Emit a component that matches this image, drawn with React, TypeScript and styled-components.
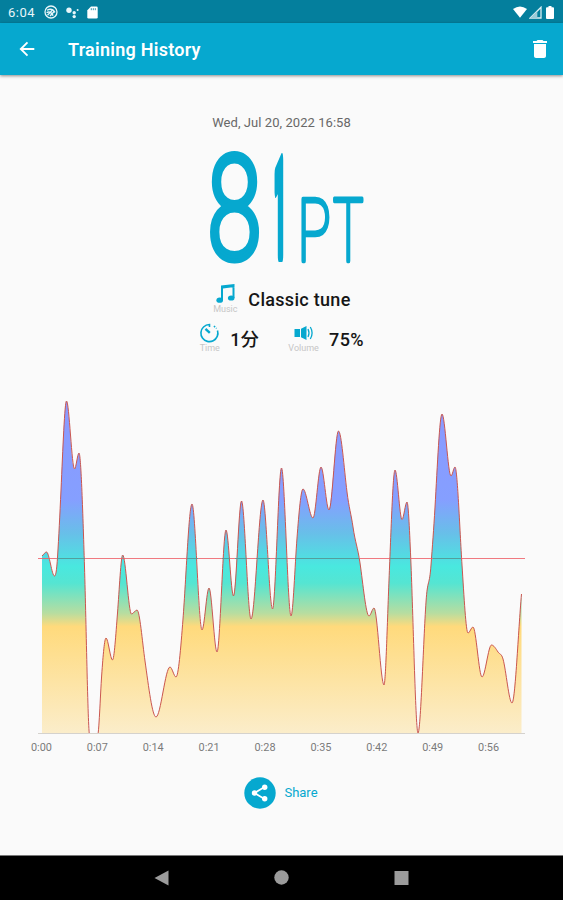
import React from "react";
import styled, { createGlobalStyle } from "styled-components";

const accent = "#06a8cf";

const GlobalStyle = createGlobalStyle`
  *, *::before, *::after { box-sizing: border-box; }
  body { margin: 0; background: #fafafa; font-family: Roboto, "Noto Sans CJK JP", sans-serif; }
`;

const Screen = styled.div`
  display: flex;
  flex-direction: column;
  width: 563px;
  height: 900px;
  background: #fafafa;
  overflow: hidden;
`;

const StatusBar = styled.header`
  display: flex;
  align-items: center;
  justify-content: space-between;
  height: 23px;
  padding: 1px 7px 0 8px;
  background: #047f9d;
  color: #e8f6fa;
  font-size: 13px;
  svg { display: block; }
`;

const StatusGroup = styled.div<{ $gap: number }>`
  display: flex;
  align-items: center;
  gap: ${(p) => p.$gap}px;
`;

const Clock = styled.span`
  width: 27px;
  margin-right: 1px;
  letter-spacing: 0.5px;
`;

const AppBar = styled.div`
  display: flex;
  align-items: center;
  height: 52px;
  padding: 0 11px 0 15px;
  background: ${accent};
  box-shadow: 0 1px 3px rgba(0, 0, 0, 0.45);
  color: #fff;
  svg { display: block; }
`;

const Title = styled.h1`
  flex: 1;
  margin: 1px 0 0 29px;
  font-size: 18px;
  font-weight: 600;
  line-height: 24px;
  letter-spacing: 0.25px;
`;

const IconButton = styled.button`
  display: flex;
  padding: 0;
  border: 0;
  background: none;
  color: inherit;
`;

const Summary = styled.section`
  display: flex;
  flex-direction: column;
  align-items: center;
  height: 315px;
  padding-top: 38px;
`;

const DateText = styled.time`
  height: 20px;
  color: #686868;
  font-size: 13px;
  line-height: 20px;
  letter-spacing: 0.06px;
  white-space: nowrap;
`;

const Score = styled.svg`
  display: block;
  width: 160px;
  height: 130px;
  margin: 8px 0 0 11px;
  overflow: visible;
  font-family: Roboto, sans-serif;
  font-weight: 100;
  fill: ${accent};
  stroke: ${accent};
  stroke-linejoin: round;
`;

const Facts = styled.div<{ $top: number }>`
  display: flex;
  align-items: flex-start;
  gap: 29px;
  height: 36px;
  margin-top: ${(p) => p.$top}px;
`;

const Fact = styled.div`
  display: flex;
  align-items: flex-start;
  gap: 10px;
`;

const FactIcon = styled.div<{ $width: number }>`
  display: flex;
  flex-direction: column;
  align-items: center;
  width: ${(p) => p.$width}px;
  color: #c6c6c6;
  font-size: 9px;
  line-height: 10px;
  white-space: nowrap;
  svg { display: block; }
`;

const FactValue = styled.span`
  margin-top: 5px;
  color: #161616;
  font-size: 18px;
  font-weight: 500;
  line-height: 24px;
  letter-spacing: 0.3px;
  white-space: nowrap;
`;

const Chart = styled.figure`
  height: 365px;
  margin: 0;
`;

const Plot = styled.svg`
  display: block;
`;

const Axis = styled.div`
  display: grid;
  grid-template-columns: repeat(9, 55.9px);
  margin: -1px 0 0 13.5px;
  color: #7b7b7b;
  font-size: 10.9px;
  line-height: 16px;
  text-align: center;
`;

const ShareArea = styled.div`
  display: flex;
  flex: 1;
  justify-content: center;
  align-items: flex-start;
  padding: 22px 1px 0 0;
`;

const ShareButton = styled.button`
  display: flex;
  align-items: center;
  gap: 8px;
  padding: 0;
  border: 0;
  background: none;
  color: ${accent};
  font: 400 13px/32px Roboto, sans-serif;
  svg { display: block; }
`;

const NavBar = styled.nav`
  display: flex;
  align-items: center;
  justify-content: center;
  gap: 104px;
  height: 45px;
  border-top: 1px solid #777;
  background: #000;
`;

const samples: [number, number][] = [
  [42, 556], [46.5, 552], [54.5, 576], [57.6, 556], [61, 490], [66.5, 401],
  [74.5, 469], [79, 453], [84.5, 567], [89.7, 736], [97.5, 736],
  [101.7, 675], [106, 638], [112.5, 660], [117.5, 613], [122.7, 555], [131.5, 614], [137, 610],
  [145, 661], [156, 717], [170, 667], [176, 677], [183, 619],
  [192, 504], [202, 630], [209, 588], [217, 652], [226, 530], [233.5, 596],
  [241.5, 501], [251, 619], [263, 500], [272.5, 609], [281.5, 468], [291, 616],
  [297, 538], [303, 489], [313, 518], [321, 467], [329, 510], [338.5, 431], [347, 492], [353, 527],
  [360, 563], [369, 616], [374, 608], [384, 685],
  [389, 580], [395, 470], [402, 519.5], [407, 502], [411, 565],
  [418, 733], [426, 602], [431, 565], [435, 507], [442, 414], [451, 476], [455, 467],
  [462, 565], [468, 633], [473, 627], [482, 677], [491.5, 645],
  [498, 652], [503, 659], [512, 703], [521.5, 594],
];

/* Monotone cubic interpolation keeps every peak and valley on its sample. */
function smooth(points: [number, number][]): string {
  const slope = points.slice(1).map((p, i) => (p[1] - points[i][1]) / (p[0] - points[i][0]));
  const tangent = points.map((_, i) => {
    if (i === 0) return slope[0];
    if (i === points.length - 1) return slope[i - 1];
    const a = slope[i - 1];
    const b = slope[i];
    if (a * b <= 0) return 0;
    return Math.sign(a) * Math.min(Math.abs(a + b) * 0.62, 2.5 * Math.abs(a), 2.5 * Math.abs(b));
  });
  return points.slice(1).reduce((path, [x, y], i) => {
    const [px, py] = points[i];
    const d = (x - px) / 3;
    return `${path} C${px + d},${(py + tangent[i] * d).toFixed(2)} ${x - d},${(y - tangent[i + 1] * d).toFixed(2)} ${x},${y}`;
  }, `M${points[0][0]},${points[0][1]}`);
}

const curve = smooth(samples);
const ticks = ["0:00", "0:07", "0:14", "0:21", "0:28", "0:35", "0:42", "0:49", "0:56"];

export default function App() {
  return (
    <>
      <GlobalStyle />
      <Screen>
        <StatusBar>
          <StatusGroup $gap={8}>
            <Clock>6:04</Clock>
            <svg width="14" height="14" viewBox="0 0 14 14" fill="none" stroke="#e8f6fa" strokeWidth="1.3">
              <circle cx="7" cy="7" r="6" />
              <path d="M3 5.2q5-2.7 8 2.2M2.6 7.6q4-2 6.5 3M3.5 10.3 8 5.5M6 11l4.6-5" />
            </svg>
            <svg width="13" height="13" viewBox="0 0 13 13" fill="#e8f6fa">
              <circle cx="3" cy="4.3" r="2.7" /><circle cx="8.2" cy="6.7" r="1.7" />
              <circle cx="11.6" cy="4" r="1" /><circle cx="8.2" cy="10.6" r="1.7" />
            </svg>
            <svg width="11" height="13" viewBox="0 0 11 13">
              <path d="M4 0.5h5.4q1.3 0 1.3 1.3v9.4q0 1.3-1.3 1.3H1.6Q.3 12.5 .3 11.2V4.2Z" fill="#fff" />
              <path d="M4.3 2.2v2M6.3 2.2v2M8.3 2.2v2" stroke="#047f9d" strokeWidth=".8" />
            </svg>
          </StatusGroup>
          <StatusGroup $gap={2}>
            <svg width="14" height="12" viewBox="0 0 14 12"><path d="M0 3Q7-2.2 14 3L7 11.7Z" fill="#fff" /></svg>
            <svg width="13" height="13" viewBox="0 0 13 13">
              <path d="M1.2 12 12 1.2V12Z" fill="none" stroke="#d9eef3" strokeWidth="1.3" />
              <path d="M1 12.3 8.3 5v7.3Z" fill="#9bcbd8" />
            </svg>
            <svg width="12" height="13" viewBox="0 0 12 13"><path d="M4.5 0h3v1.3H9q1 0 1 1V12q0 1-1 1H3q-1 0-1-1V2.3q0-1 1-1h1.5Z" fill="#fff" /></svg>
          </StatusGroup>
        </StatusBar>
        <AppBar>
          <IconButton aria-label="Back">
            <svg width="24" height="24" viewBox="0 0 24 24" fill="none" stroke="#fff" strokeWidth="1.9">
              <path d="M19.3 12H5.8M12.5 5.3 5.8 12l6.7 6.7" />
            </svg>
          </IconButton>
          <Title>Training History</Title>
          <IconButton aria-label="Delete">
            <svg width="24" height="24" viewBox="0 0 24 24" fill="#fff">
              <path d="M6 19c0 1.1.9 2 2 2h8c1.1 0 2-.9 2-2V7H6v12zM19 4h-3.5l-1-1h-5l-1 1H5v2h14V4z" />
            </svg>
          </IconButton>
        </AppBar>

        <Summary>
          <DateText>Wed, Jul 20, 2022 16:58</DateText>
          <Score viewBox="207 141 160 130" aria-label="81PT">
            <text fontSize="146" strokeWidth="5" fontWeight="300" transform="translate(206.5 260) scale(.69 1)" style={undefined}>8</text>
            <text fontSize="133" fontWeight="900" strokeWidth="14" transform="translate(274 255) scale(.15 1)">1</text>
            <g fontSize="88" strokeWidth="4.6">
              <text transform="translate(297.5 260.5) scale(.63 1)">P</text>
              <text transform="translate(333 260.5) scale(.58 1)">T</text>
            </g>
          </Score>
          <Facts $top={12}>
            <Fact>
              <FactIcon $width={26}>
                <svg width="22" height="21" viewBox="0 0 22 21" fill={accent}>
                  <path d="M7 2.5 20.5 1v3L9 5.5v11.7H7ZM18.5 2h2v13h-2Z" />
                  <ellipse cx="5.7" cy="17.2" rx="3.3" ry="2.6" /><ellipse cx="17.2" cy="15" rx="3.3" ry="2.6" />
                </svg>
                Music
              </FactIcon>
              <FactValue>Classic tune</FactValue>
            </Fact>
          </Facts>
          <Facts $top={4}>
            <Fact>
              <FactIcon $width={21}>
                <svg width="21" height="20" viewBox="0 0 21 20" fill="none" stroke={accent} strokeWidth="1.6">
                  <path d="M4.500 4A8.500 8.500 0 1 0 18.500 7.500M4.500 4Q7 1.500 10.500 1.500V4" />
                  <path d="m15 3 2.500 2.500" strokeDasharray="1.500 1.500" />
                  <path d="m6.500 5.800 4.300 4" strokeWidth="2.400" />
                </svg>
                Time
              </FactIcon>
              <FactValue>1分</FactValue>
            </Fact>
            <Fact>
              <FactIcon $width={31}>
                <svg width="22" height="20" viewBox="0 0 22 20" fill={accent}>
                  <path d="M1.500 6H7v8H1.500Zm6.500-.3L13.500 3v14L8 14.300Z" />
                  <path d="M15 6q2 4 0 8M17.300 4q3.600 6 0 12" fill="none" stroke={accent} strokeWidth="1.300" />
                </svg>
                Volume
              </FactIcon>
              <FactValue>75%</FactValue>
            </Fact>
          </Facts>
        </Summary>

        <Chart>
          <Plot width="563" height="351" viewBox="0 390 563 351" aria-label="Training intensity over time">
            <defs>
              <linearGradient id="intensity" gradientUnits="userSpaceOnUse" x1="0" y1="400" x2="0" y2="733">
                <stop offset="0" stopColor="#8b99ff" />
                <stop offset=".3" stopColor="#859fff" />
                <stop offset=".4" stopColor="#68bfe9" />
                <stop offset=".5" stopColor="#49e8df" />
                <stop offset=".55" stopColor="#55e5d2" />
                <stop offset=".64" stopColor="#b7dda0" />
                <stop offset=".68" stopColor="#ffda7c" />
                <stop offset="1" stopColor="#fbedca" />
              </linearGradient>
              <clipPath id="plotArea"><path d="M38 390H526V733.500H38Z" /></clipPath>
            </defs>
            <g clipPath="url(#plotArea)">
              <path d={`${curve} V733 H42 Z`} fill="url(#intensity)" />
              <path d={curve} fill="none" stroke="#c9564f" strokeWidth="1" />
            </g>
            <path d="M38 558.500H525" stroke="#ee5961" strokeOpacity=".8" />
            <path d="M57 558.500h28M187 558.500h11M222 558.500h8M235 558.500h12M256 558.500h14M275 558.500h12M295 558.500h64M390 558.500h20M433 558.500h28" stroke="#36a9a5" strokeOpacity=".8" />
            <path d="M38 733.500H525" stroke="#d5d2cd" />
          </Plot>
          <Axis>{ticks.map((tick) => <span key={tick}>{tick}</span>)}</Axis>
        </Chart>

        <ShareArea>
          <ShareButton>
            <svg width="32" height="32" viewBox="0 0 32 32">
              <circle cx="16" cy="16" r="15.700" fill={accent} />
              <path d="M20.500 10 10.500 16l10 6" fill="none" stroke="#fff" strokeWidth="1.700" />
              <g fill="#fff"><circle cx="20.700" cy="10.200" r="2.700" /><circle cx="10.500" cy="16" r="2.700" /><circle cx="20.700" cy="21.800" r="2.700" /></g>
            </svg>
            Share
          </ShareButton>
        </ShareArea>
        <NavBar>
          <svg width="16" height="16" viewBox="0 0 16 16"><path d="M.5 8 14.500 .5v15Z" fill="#9b9b9b" /></svg>
          <svg width="16" height="16" viewBox="0 0 16 16"><circle cx="7.500" cy="7.500" r="7.200" fill="#9b9b9b" /></svg>
          <svg width="16" height="16" viewBox="0 0 16 16"><path d="M.5 1h14v14h-14Z" fill="#9b9b9b" /></svg>
        </NavBar>
      </Screen>
    </>
  );
}
